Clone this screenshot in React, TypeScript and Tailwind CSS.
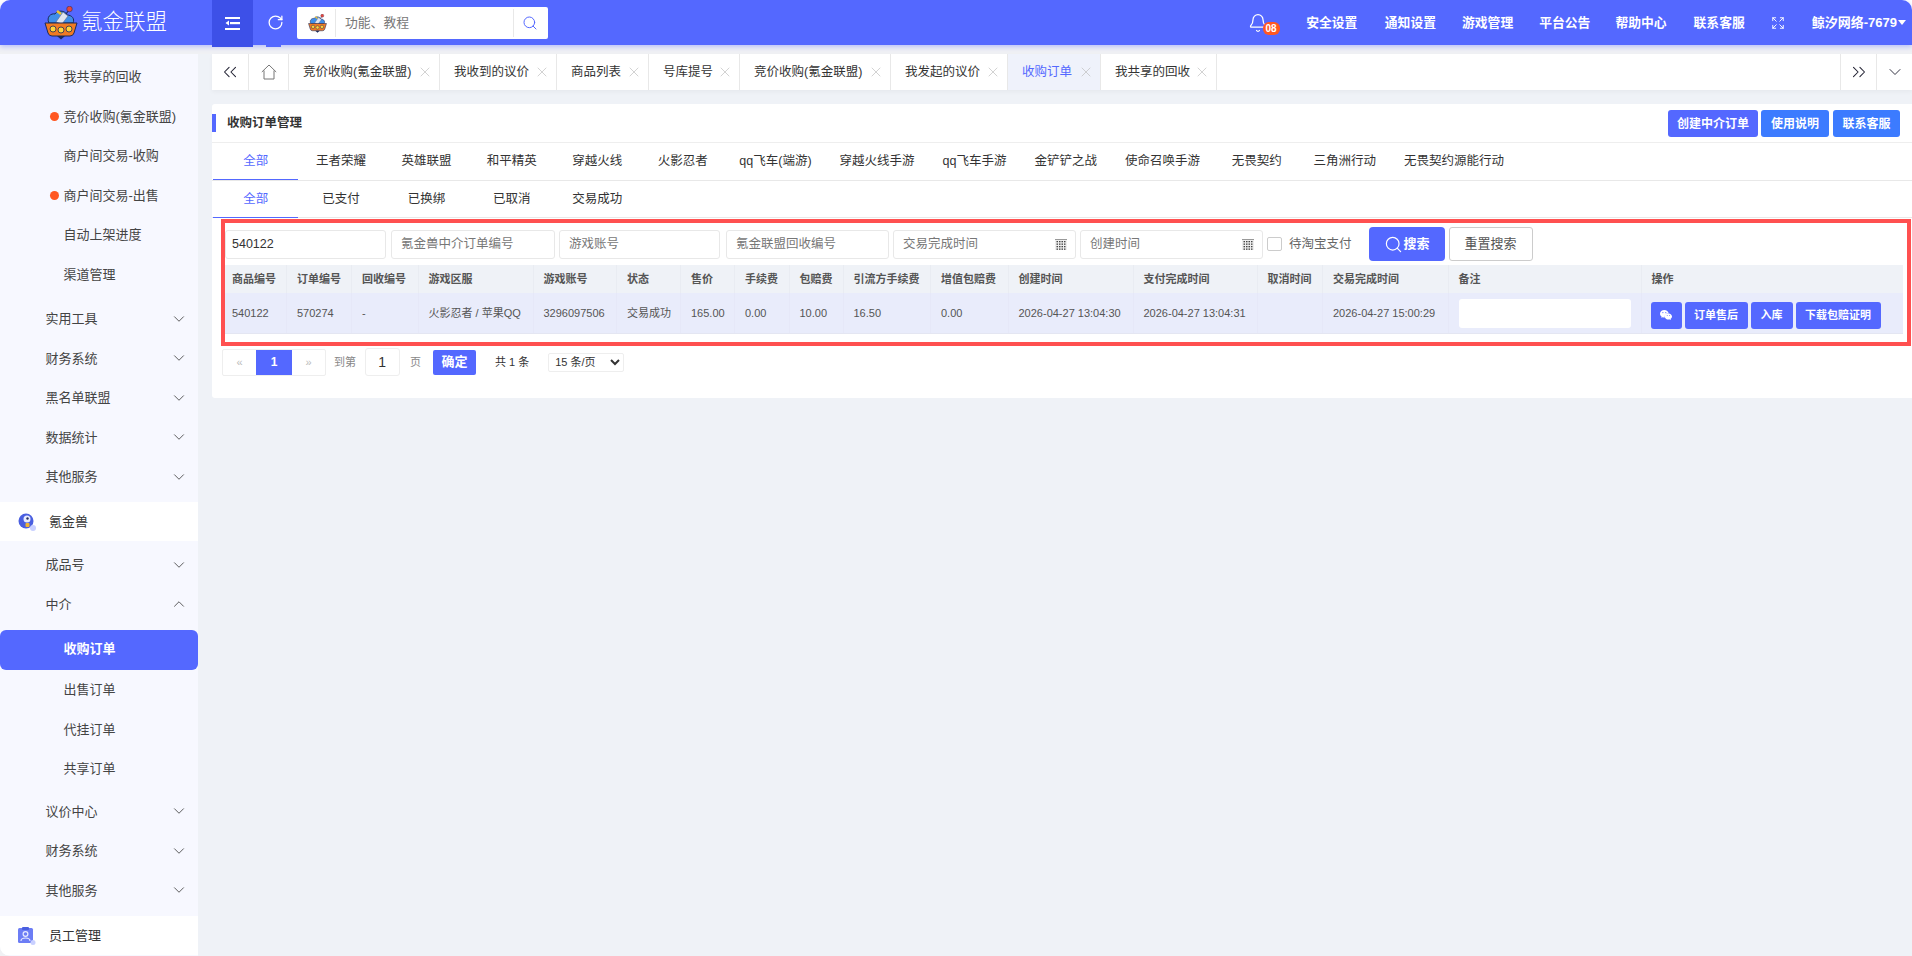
import React from "react";
import { Bell, ChevronDown, ChevronUp, ChevronsLeft, ChevronsRight, Expand, RotateCw, Search, X } from "lucide-react";
import { SiWechat } from "react-icons/si";

const FONT = '"Liberation Sans","Noto Sans CJK SC",sans-serif';

function Logo({ s = 34 }: { s?: number }) {
  return (
    <svg width={s} height={s} viewBox="0 0 34 34">
      <path d="M5 17 C2 11 7 7 11 8 C13 4 21 4 23 9 C28 9 31 13 29 17Z" fill="#3f8ee8" stroke="#1c2a5a" strokeWidth="1" />
      <path d="M12 16 L19 6 L24 10 L18 18Z" fill="#dfe3ee" stroke="#5a6a90" strokeWidth="0.6" />
      <path d="M17 8 L13 5" stroke="#f2c230" strokeWidth="2.5" />
      <path d="M22 8 L25 4" stroke="#1c2a5a" strokeWidth="1.2" />
      <circle cx="25.5" cy="3" r="2.8" fill="#e6483d" stroke="#1c2a5a" strokeWidth="0.5" />
      <path d="M1 17 H33 L30 27 Q29 30 26 30 H8 Q5 30 4 27Z" fill="#f07a23" stroke="#1c2a5a" strokeWidth="1" />
      <circle cx="9" cy="23" r="3" fill="#ffd43c" stroke="#1c2a5a" strokeWidth="0.8" />
      <circle cx="17" cy="24" r="3" fill="#ffd43c" stroke="#1c2a5a" strokeWidth="0.8" />
      <circle cx="25" cy="23" r="3" fill="#ffd43c" stroke="#1c2a5a" strokeWidth="0.8" />
      <path d="M13 30 L17 33.5 L21 30Z" fill="#1c2a5a" />
    </svg>
  );
}

function Sub({ t, dot, active, tall }: { t: string; dot?: boolean; active?: boolean; tall?: boolean }) {
  return (
    <div className={`relative flex items-center pl-[63.5px] text-[13px] ${tall ? "h-[40px] pb-[2px]" : "h-[39.5px]"} ${active ? "rounded-[6px] bg-[#5468ff] font-bold text-white" : "text-[#444]"}`}>
      {dot && <span className="absolute left-[50px] top-[15.5px] h-[9px] w-[9px] rounded-full bg-[#ff5722]" />}
      {t}
    </div>
  );
}

function Top({ t, open }: { t: string; open?: boolean }) {
  return (
    <div className="flex h-[39.5px] items-center justify-between pl-[45.5px] pr-[10px] text-[13px] text-[#444]">
      {t}
      {open ? <ChevronUp size={18} strokeWidth={1.15} /> : <ChevronDown size={18} strokeWidth={1.15} />}
    </div>
  );
}

function Group({ t, icon }: { t: string; icon: React.ReactNode }) {
  return (
    <div className="flex h-[39px] items-center bg-white pl-[18px] text-[13px] text-[#333]">
      <span className="mr-[13px] flex w-[18px] justify-center">{icon}</span>
      {t}
    </div>
  );
}

function Sidebar() {
  return (
    <aside className="h-full w-[198px] shrink-0 overflow-hidden rounded-bl-[10px] bg-[#f7f8ff] pt-[3px]">
      <Sub t="我共享的回收" />
      <Sub t="竞价收购(氪金联盟)" dot />
      <Sub t="商户间交易-收购" />
      <Sub t="商户间交易-出售" dot />
      <Sub t="自动上架进度" />
      <Sub t="渠道管理" />
      <div className="h-[5px]" />
      <Top t="实用工具" />
      <Top t="财务系统" />
      <Top t="黑名单联盟" />
      <Top t="数据统计" />
      <Top t="其他服务" />
      <div className="h-[5.5px]" />
      <Group
        t="氪金兽"
        icon={
          <svg width="18" height="18" viewBox="0 0 18 18">
            <circle cx="8" cy="8" r="7.5" fill="#4a5fe0" />
            <circle cx="15" cy="15" r="3" fill="#c9d0ff" />
            <circle cx="9" cy="6" r="3.5" fill="#e9ecff" />
            <circle cx="9.5" cy="5.5" r="1.2" fill="#26305f" />
            <rect x="7.5" y="10" width="4" height="4" rx="1" fill="#f2b632" />
          </svg>
        }
      />
      <div className="h-[4px]" />
      <Top t="成品号" />
      <Top t="中介" open />
      <div className="h-[6px]" />
      <Sub t="收购订单" active tall />
      <Sub t="出售订单" />
      <Sub t="代挂订单" />
      <Sub t="共享订单" />
      <div className="h-[3px]" />
      <Top t="议价中心" />
      <Top t="财务系统" />
      <Top t="其他服务" />
      <div className="h-[6px]" />
      <Group
        t="员工管理"
        icon={
          <svg width="18" height="18" viewBox="0 0 18 18">
            <rect x="0" y="1" width="15" height="15" rx="1.5" fill="#6c7df5" />
            <rect x="4" y="0" width="7" height="3" rx="1" fill="#4a5fe0" />
            <circle cx="7.5" cy="7" r="2.4" fill="none" stroke="#e8ebff" strokeWidth="1.2" />
            <path d="M3 14 C3 10 12 10 12 14" fill="none" stroke="#e8ebff" strokeWidth="1.2" />
            <circle cx="15" cy="15.5" r="2.5" fill="#c9d0ff" />
          </svg>
        }
      />
    </aside>
  );
}

function Header() {
  const links: [string, string][] = [["安全设置", "ml-[25.5px]"], ["通知设置", "ml-[27.5px]"], ["游戏管理", "ml-[26px]"], ["平台公告", "ml-[26px]"], ["帮助中心", "ml-[25px]"], ["联系客服", "ml-[27px]"]];
  return (
    <header className="relative z-10 flex h-[45px] shrink-0 items-start rounded-t-[10px] bg-[#5468ff] text-white shadow-[0_2px_5px_rgba(84,104,255,0.35)]">
      <div className="flex h-[45px] w-[212px] items-center pl-[44px]">
        <Logo />
        <span className="ml-[3px] text-[21.5px] font-light leading-none">氪金联盟</span>
      </div>
      <div className="flex h-[47px] w-[41px] items-center justify-center bg-[#3d50e8]">
        <svg width="15" height="13" viewBox="0 0 15 13" fill="white">
          <rect x="0" y="0" width="15" height="2" />
          <rect x="5" y="5" width="10" height="2.2" />
          <rect x="0" y="11" width="15" height="2" />
          <path d="M4 3.6 L0.5 6.1 L4 8.6Z" />
        </svg>
      </div>
      <div className="relative flex h-[45px] w-[44px] items-center justify-center">
        <RotateCw size={17} strokeWidth={1.8} />
        <span className="absolute bottom-[-2px] left-[13px] h-[2px] w-[15px] bg-[#5468ff]" />
      </div>
      <div className="mt-[7px] flex h-[32px] w-[251px] items-center rounded-[2px] border-2 border-white bg-white">
        <div className="flex h-full w-[37px] items-center justify-center border-r border-[#e8e8e8]">
          <Logo s={19} />
        </div>
        <span className="ml-[9px] flex-1 text-[12.8px] text-[#777]">功能、教程</span>
        <div className="flex h-full w-[33px] items-center justify-center border-l border-[#e8e8e8]">
          <Search size={16} strokeWidth={1.5} className="text-[#5468ff]" />
        </div>
      </div>
      <div className="ml-auto flex h-[45px] items-center pr-[6px] text-[12.8px] font-bold">
        <div className="relative mr-[16px] h-[20px] w-[15px]">
          <Bell size={20} strokeWidth={1.5} className="-ml-[2px]" />
          <span className="absolute left-[13px] top-[9.5px] flex h-[13px] w-[17px] items-center justify-center rounded-[6px] bg-[#ff5722] text-[10px] leading-none">08</span>
        </div>
        {links.map(([t, c]) => <span key={t} className={c}>{t}</span>)}
        <Expand size={14} strokeWidth={1.6} className="ml-[26px]" />
        <span className="ml-[27px] text-[13px]">鲸汐网络-7679</span>
        <span className="ml-[1px] h-0 w-0 border-x-[4px] border-t-[5px] border-x-transparent border-t-white" />
      </div>
    </header>
  );
}

const tabs: [string, string, boolean?][] = [
  ["竞价收购(氪金联盟)", "w-[151px]"],
  ["我收到的议价", "w-[117px]"],
  ["商品列表", "w-[92px]"],
  ["号库提号", "w-[91px]"],
  ["竞价收购(氪金联盟)", "w-[151px]"],
  ["我发起的议价", "w-[117px]"],
  ["收购订单", "w-[93px]", true],
  ["我共享的回收", "w-[116px]"],
];

function TabBar() {
  return (
    <div className="flex h-[36px] shrink-0 items-stretch bg-white text-[12.5px] text-[#333] shadow-[0_2px_4px_rgba(0,0,0,0.04)]">
      <div className="flex w-[37px] items-center justify-center border-r border-[#e8e8e8]"><ChevronsLeft size={22} strokeWidth={1.15} className="text-[#223]" /></div>
      <div className="flex w-[40px] items-center justify-center border-r border-[#e8e8e8]">
        <svg width="16" height="16" viewBox="0 0 16 16" fill="none" stroke="#777" strokeWidth="1">
          <path d="M0.8 8 L8 1 L15.2 8 M3 6.5 V15 H13 V6.5" />
        </svg>
      </div>
      {tabs.map(([t, w, active], i) => (
        <div key={i} className={`flex items-center justify-between border-r border-[#e8e8e8] pl-[14px] pr-[6px] ${w} ${active ? "bg-[#eff2fb] text-[#5468ff]" : ""}`}>
          {t}
          <X size={16} strokeWidth={1} className="text-[#bbb]" />
        </div>
      ))}
      <div className="flex-1" />
      <div className="flex w-[36px] items-center justify-center border-l border-[#e8e8e8]"><ChevronsRight size={22} strokeWidth={1.15} className="text-[#223]" /></div>
      <div className="flex w-[36px] items-center justify-center border-l border-[#e8e8e8]"><ChevronDown size={20} strokeWidth={1.1} className="text-[#223]" /></div>
    </div>
  );
}

function TabRow({ items, low }: { items: string[]; low?: boolean }) {
  return (
    <div className="flex h-[37.5px] items-center border-b border-[#e8e8e8] pl-[1px] text-[12.5px] text-[#333]">
      {items.map((t, i) => (
        <div key={t} className={`flex h-full min-w-[85.4px] items-center justify-center px-[14px] ${low ? "pt-[1px]" : ""} ${i === 0 ? "-mb-px border-b border-[#5468ff] text-[#5468ff]" : ""}`}>{t}</div>
      ))}
    </div>
  );
}

function CalIcon() {
  return (
    <svg width="12" height="11" viewBox="0 0 12 11">
      <rect width="12" height="11" fill="#eee" />
      <rect width="12" height="1" fill="#999" />
      {[2, 4.5, 7, 9.5].map((y) => [1.5, 4, 6.5, 9].map((x) => <rect key={`${x}-${y}`} x={x} y={y} width="1.5" height="1.3" fill="#444" />))}
    </svg>
  );
}

function Inp({ t, w, cal, val }: { t?: string; w: string; cal?: boolean; val?: string }) {
  return (
    <div className={`flex h-[29px] items-center justify-between rounded-[3px] border border-[#e8e8e8] bg-white pr-[8px] text-[12.5px] ${val ? "pl-[6px]" : "pl-[9px]"} ${w}`}>
      <span className={val ? "text-[#333]" : "text-[#777]"}>{val ?? t}</span>
      {cal && <CalIcon />}
    </div>
  );
}

const cols: [string, number, string][] = [
  ["商品编号", 62, "540122"],
  ["订单编号", 65, "570274"],
  ["回收编号", 66.5, "-"],
  ["游戏区服", 115, "火影忍者 / 苹果QQ"],
  ["游戏账号", 83.5, "3296097506"],
  ["状态", 64, "交易成功"],
  ["售价", 54, "165.00"],
  ["手续费", 54.5, "0.00"],
  ["包赔费", 54, "10.00"],
  ["引流方手续费", 87.5, "16.50"],
  ["增值包赔费", 77.5, "0.00"],
  ["创建时间", 125, "2026-04-27 13:04:30"],
  ["支付完成时间", 124, "2026-04-27 13:04:31"],
  ["取消时间", 65.5, ""],
  ["交易完成时间", 125.5, "2026-04-27 15:00:29"],
];

function Btn({ children, w }: { children: React.ReactNode; w: string }) {
  return <span className={`flex h-[27px] items-center justify-center rounded-[3px] bg-[#5468ff] text-[11px] font-bold text-white ${w}`}>{children}</span>;
}

function Table() {
  return (
    <div className="mt-[4px] w-[1678px] text-[11px] text-[#555]">
      <div className="flex h-[28px] items-center bg-[#eff2f7] font-bold text-[#555]">
        {cols.map(([h, w], i) => (
          <div key={h} className={`flex h-full shrink-0 items-center border-r border-[#e9ecf2] ${i === 0 ? "pl-[7px]" : "pl-[10px]"}`} style={{ width: w }}>{h}</div>
        ))}
        <div className="flex h-full w-[193px] shrink-0 items-center border-r border-[#e9ecf2] pl-[10px]">备注</div>
        <div className="flex h-full flex-1 items-center pl-[10px]">操作</div>
      </div>
      <div className="flex h-[41px] items-center border-b border-[#e4e6f2] bg-[#e9ecfb]">
        {cols.map(([h, w, v], i) => (
          <div key={h} className={`flex h-full shrink-0 items-center border-r border-[#e6e8f8] ${i === 0 ? "pl-[7px]" : "pl-[10px]"}`} style={{ width: w }}>{v}</div>
        ))}
        <div className="flex h-full w-[193px] shrink-0 items-center border-r border-[#e6e8f8] pl-[10px] pt-[1px]">
          <div className="h-[29px] w-[172px] rounded-[3px] bg-white" />
        </div>
        <div className="flex h-full flex-1 items-center pl-[9.5px] pt-[4px]">
          <div className="flex gap-[3px]">
            <Btn w="w-[30.5px]"><SiWechat size={12} /></Btn>
            <Btn w="w-[63px]">订单售后</Btn>
            <Btn w="w-[42px]">入库</Btn>
            <Btn w="w-[85px]">下载包赔证明</Btn>
          </div>
        </div>
      </div>
    </div>
  );
}

function Filters() {
  return (
    <div className="flex items-center">
      <Inp w="w-[161px]" val="540122" />
      <div className="w-[5px]" />
      <Inp w="w-[164px]" t="氪金兽中介订单编号" />
      <div className="w-[4px]" />
      <Inp w="w-[161px]" t="游戏账号" />
      <div className="w-[6px]" />
      <Inp w="w-[163px]" t="氪金联盟回收编号" />
      <div className="w-[4px]" />
      <Inp w="w-[183px]" t="交易完成时间" cal />
      <div className="w-[4px]" />
      <Inp w="w-[183px]" t="创建时间" cal />
      <span className="ml-[4px] h-[14px] w-[15px] rounded-[2px] border border-[#ccc] bg-white" />
      <span className="ml-[7px] text-[12.5px] text-[#666]">待淘宝支付</span>
      <div className="ml-[17px] flex h-[34px] w-[76px] items-center justify-center rounded-[4px] bg-[#5468ff] text-[13px] font-bold text-white">
        <Search size={19} strokeWidth={1.5} className="mr-[1px]" />搜索
      </div>
      <div className="ml-[4px] flex h-[34px] w-[84px] items-center justify-center rounded-[3px] border border-[#ccc] bg-white text-[13px] text-[#555]">重置搜索</div>
    </div>
  );
}

function Pagination() {
  return (
    <div className="flex h-[28px] items-center text-[11px] text-[#888]">
      <div className="ml-[1px] flex h-[27px] items-stretch rounded-[2px] border border-[#eee] text-[#bbb]">
        <span className="flex w-[33px] items-center justify-center">«</span>
        <span className="flex w-[36px] items-center justify-center bg-[#5468ff] text-[12px] font-bold text-white">1</span>
        <span className="flex w-[33px] items-center justify-center">»</span>
      </div>
      <span className="ml-[8px]">到第</span>
      <span className="ml-[8.5px] flex h-[28px] w-[35.5px] items-center justify-center rounded-[3px] border border-[#eee] text-[14px] text-[#333]">1</span>
      <span className="ml-[10px]">页</span>
      <span className="ml-[12px] flex h-[25px] w-[43px] items-center justify-center rounded-[2px] bg-[#5468ff] text-[13px] font-bold text-white">确定</span>
      <span className="ml-[19px] text-[#333]">共 1 条</span>
      <select defaultValue="15" className="ml-[19px] h-[19px] w-[76px] rounded-[2px] border border-[#eee] bg-white pl-[2px] text-[11px] text-[#333]">
        <option value="15">15 条/页</option>
      </select>
    </div>
  );
}

function Card() {
  return (
    <section className="mt-[14px] h-[294px] shrink-0 rounded-l-[3px] bg-white">
      <div className="flex h-[39px] items-start border-b border-[#eee]">
        <span className="mt-[10px] h-[18px] w-[4px] bg-[#5468ff]" />
        <span className="ml-[11px] mt-[11px] text-[12.5px] font-bold leading-[16px] text-[#333]">收购订单管理</span>
        <div className="ml-auto mr-[12px] mt-[6px] flex text-[12px] font-bold text-white">
          <span className="flex h-[27px] w-[90px] items-center justify-center rounded-[3px] bg-[#5468ff]">创建中介订单</span>
          <span className="ml-[3px] flex h-[27px] w-[68px] items-center justify-center rounded-[3px] bg-[#3c7bff]">使用说明</span>
          <span className="ml-[4px] flex h-[27px] w-[67px] items-center justify-center rounded-[3px] bg-[#3c7bff]">联系客服</span>
        </div>
      </div>
      <TabRow items={["全部", "王者荣耀", "英雄联盟", "和平精英", "穿越火线", "火影忍者", "qq飞车(端游)", "穿越火线手游", "qq飞车手游", "金铲铲之战", "使命召唤手游", "无畏契约", "三角洲行动", "无畏契约源能行动"]} />
      <TabRow low items={["全部", "已支付", "已换绑", "已取消", "交易成功"]} />
      <div className="ml-[9px] mr-px mt-[1px] h-[127px] border-4 border-[#ff5050] pt-[4px]">
        <Filters />
        <Table />
      </div>
      <div className="ml-[9px] mt-[2px]"><Pagination /></div>
    </section>
  );
}

export default function App() {
  return (
    <div className="flex h-screen w-screen flex-col overflow-hidden bg-white" style={{ fontFamily: FONT }}>
      <Header />
      <div className="flex min-h-0 flex-1 flex-col bg-[#f0f1f4] pt-[9px]">
        <div className="flex min-h-0 flex-1">
          <Sidebar />
          <div className="w-[14px] shrink-0 bg-[#eff2f7]" />
          <main className="flex min-w-0 flex-1 flex-col bg-[#eff2f7]">
            <TabBar />
            <Card />
          </main>
        </div>
      </div>
    </div>
  );
}
